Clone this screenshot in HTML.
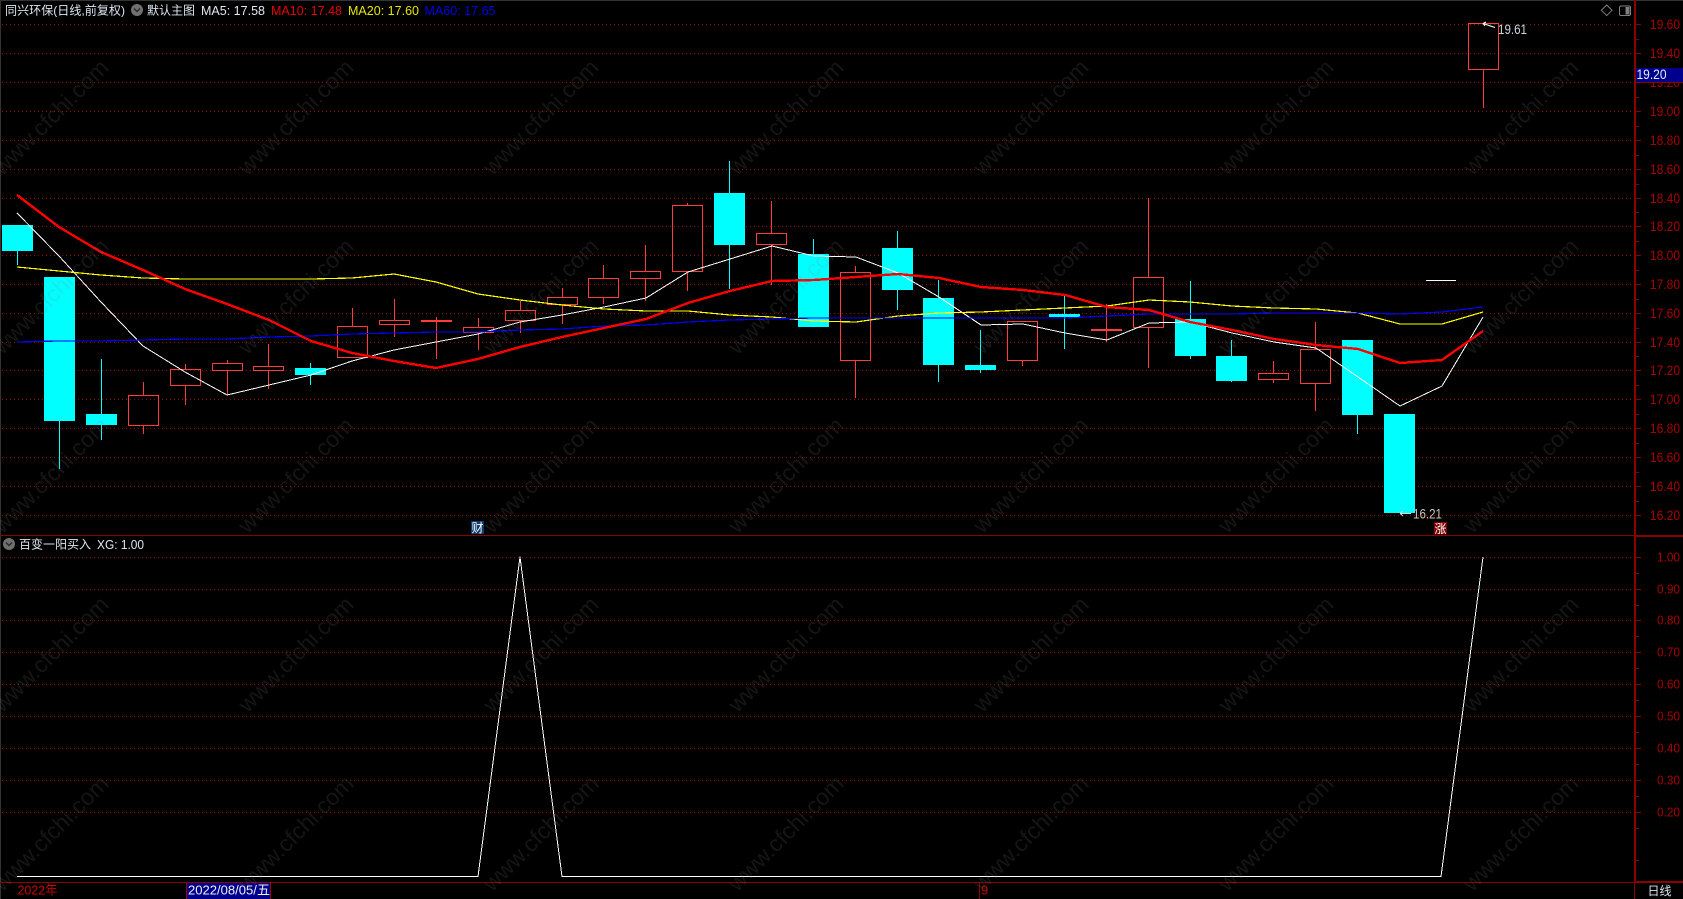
<!DOCTYPE html>
<html lang="zh">
<head>
<meta charset="utf-8">
<title>同兴环保 日线</title>
<style>
html,body{margin:0;padding:0;background:#000;width:1683px;height:899px;overflow:hidden}
svg{display:block}
text{font-family:"Liberation Sans","Noto Sans CJK SC",sans-serif;font-size:13px}
.g{stroke:#980000;stroke-width:1;stroke-dasharray:1 3;fill:none}
.a text{fill:#a80000}
.a .m{font-size:14px}
.r{fill:none;stroke:#ff3c3c;stroke-width:1}
.c{fill:#0ff}
.w text{font-size:23px;fill:rgba(128,128,128,.16);text-anchor:end}
</style>
</head>
<body>
<svg width="1683" height="899" viewBox="0 0 1683 899" xmlns="http://www.w3.org/2000/svg">
<rect width="1683" height="899" fill="#000"/>
<path d="M0 .5H1683M.5 0V899" stroke="#333" fill="none" shape-rendering="crispEdges"/>

<!-- grid -->
<g class="g" shape-rendering="crispEdges">
<path d="M2 24.5H1635M2 53.5H1635M2 82.5H1635M2 111.5H1635M2 140.5H1635M2 169.5H1635M2 198.5H1635M2 226.5H1635M2 255.5H1635M2 284.5H1635M2 313.5H1635M2 342.5H1635M2 370.5H1635M2 399.5H1635M2 428.5H1635M2 457.5H1635M2 486.5H1635M2 515.5H1635"/>
<path d="M2 557.5H1635M2 589.5H1635M2 620.5H1635M2 652.5H1635M2 684.5H1635M2 716.5H1635M2 748.5H1635M2 780.5H1635M2 812.5H1635"/>
</g>

<!-- candles -->
<g shape-rendering="crispEdges">
<g class="c">
<rect x="2" y="225" width="31" height="26"/>
<rect x="44" y="277" width="31" height="144"/>
<rect x="86" y="414" width="31" height="11"/>
<rect x="295" y="368" width="31" height="7"/>
<rect x="714" y="193" width="31" height="52"/>
<rect x="798" y="254" width="31" height="73"/>
<rect x="882" y="248" width="31" height="42"/>
<rect x="923" y="298" width="31" height="67"/>
<rect x="965" y="365" width="31" height="5"/>
<rect x="1049" y="314" width="31" height="3"/>
<rect x="1175" y="319" width="31" height="37"/>
<rect x="1216" y="356" width="31" height="25"/>
<rect x="1342" y="340" width="31" height="75"/>
<rect x="1384" y="414" width="31" height="99"/>
</g>
<path fill="none" stroke="#0ff" d="M17.5 251V265M59.5 421V469M101.5 359V414M101.5 425V440M310.5 363V368M310.5 375V385M729.5 161V193M729.5 245V289M813.5 239V254M897.5 231V248M897.5 290V310M938.5 280V298M938.5 365V382M980.5 330V365M980.5 370V373M1064.5 296V314M1064.5 317V349M1190.5 281V319M1190.5 356V359M1231.5 340V356M1231.5 381V382M1357.5 415V434"/>
<g class="r">
<rect x="128.5" y="395.5" width="30" height="30"/>
<rect x="170.5" y="369.5" width="30" height="16"/>
<rect x="212.5" y="363.5" width="30" height="7"/>
<rect x="253.5" y="366.5" width="30" height="4"/>
<rect x="337.5" y="326.5" width="30" height="31"/>
<rect x="379.5" y="320.5" width="30" height="4"/>
<rect x="463.5" y="327.5" width="30" height="5"/>
<rect x="505.5" y="310.5" width="30" height="10"/>
<rect x="547.5" y="297.5" width="30" height="7"/>
<rect x="588.5" y="278.5" width="30" height="19"/>
<rect x="630.5" y="271.5" width="30" height="7"/>
<rect x="672.5" y="205.5" width="30" height="66"/>
<rect x="756.5" y="233.5" width="30" height="11"/>
<rect x="840.5" y="272.5" width="30" height="88"/>
<rect x="1007.5" y="321.5" width="30" height="39"/>
<rect x="1133.5" y="277.5" width="30" height="50"/>
<rect x="1258.5" y="373.5" width="30" height="6"/>
<rect x="1300.5" y="349.5" width="30" height="34"/>
<rect x="1468.5" y="23.5" width="30" height="46"/>
<path d="M143.5 382V395M143.5 426V434M185.5 364V369M185.5 386V405M227.5 360V363M227.5 371V395M268.5 344V366M268.5 371V389M352.5 308V326M394.5 299V320M394.5 325V337M436.5 317V359M478.5 318V327M478.5 333V350M520.5 301V310M520.5 321V333M562.5 288V297M562.5 305V324M603.5 265V278M603.5 298V304M645.5 245V271M645.5 279V301M687.5 203V205M687.5 272V291M771.5 201V233M771.5 245V285M855.5 266V272M855.5 361V398M1022.5 361V366M1106.5 304V342M1148.5 198V277M1148.5 328V368M1273.5 361V373M1273.5 380V383M1315.5 322V349M1315.5 384V411M1483.5 70V108"/>
</g>
<rect x="421" y="320" width="31" height="2" fill="#ff3c3c"/>
<rect x="1091" y="329" width="31" height="2" fill="#ff3c3c"/>
<rect x="1426" y="280" width="30" height="1" fill="#fff"/>
</g>

<!-- moving averages -->
<g fill="none" shape-rendering="crispEdges" stroke-linejoin="round">
<polyline stroke="#fff" stroke-width="1" points="17,213 59,256 101,302 143,346 185,372 227,395 269,385 311,375 352,361 394,350 436,342 478,334 520,322 562,315 604,307 646,298 688,272 730,259 772,246 814,256 856,257 898,273 939,297 981,325 1023,324 1065,333 1107,340 1149,323 1190,322 1232,333 1274,342 1316,348 1358,377 1400,406 1442,386 1483,317"/>
<polyline stroke="#ff0" stroke-width="1.2" points="17,267 59,271 101,275 143,278 185,279 227,279 269,279 311,279 352,278 394,274 436,282 478,294 520,300 562,305 604,309 646,311 688,311 730,315 772,317 814,321 856,322 898,316 939,313 981,312 1023,310 1065,308 1107,306 1149,300 1190,302 1232,306 1274,308 1316,309 1358,313 1400,324 1442,324 1483,312"/>
<polyline stroke="#00f" stroke-width="1.2" points="17,342 59,341 101,341 143,340 185,339 227,339 269,337 311,336 352,334 394,333 436,332 478,332 520,330 562,329 604,326 646,325 688,322 730,320 772,319 814,318 856,318 898,318 939,318 981,318 1023,318 1065,318 1107,316 1149,314 1190,314 1232,314 1274,313 1316,313 1358,313 1400,314 1442,312 1483,307"/>
<polyline stroke="#f00" stroke-width="2.4" points="17,195 59,227 101,252 143,270 185,289 227,304 269,320 311,341 352,353 394,361 436,368 478,359 520,347 562,337 604,328 646,319 688,303 730,291 772,281 814,280 856,277 898,274 939,278 981,287 1023,290 1065,295 1107,307 1149,310 1190,322 1232,330 1274,339 1316,345 1358,349 1400,363 1442,360 1483,331"/>
<polyline stroke="#fff" stroke-width="1" points="17,876.5 478,876.5 520,557 562,876.5 1441,876.5 1483,557"/>
</g>

<!-- frame lines -->
<g shape-rendering="crispEdges" fill="none" stroke="#8c0000">
<path d="M0 535.5H1635M0 882.5H1683"/>
<rect x="1634" y="0" width="2" height="882" fill="#8c0000" stroke="none"/>
<path d="M1634.5 882V899M1635 535.5H1683M1635 536.5H1683M1635 881.5H1683M979.5 883V899"/>
<path d="M1636 24.5h5M1636 53.5h5M1636 82.5h5M1636 111.5h5M1636 140.5h5M1636 169.5h5M1636 198.5h5M1636 226.5h5M1636 255.5h5M1636 284.5h5M1636 313.5h5M1636 342.5h5M1636 370.5h5M1636 399.5h5M1636 428.5h5M1636 457.5h5M1636 486.5h5M1636 515.5h5"/>
<path d="M1636 39.5h3M1636 68.5h3M1636 97.5h3M1636 126.5h3M1636 155.5h3M1636 184.5h3M1636 212.5h3M1636 241.5h3M1636 270.5h3M1636 299.5h3M1636 328.5h3M1636 356.5h3M1636 385.5h3M1636 414.5h3M1636 443.5h3M1636 472.5h3M1636 501.5h3"/>
<path d="M1636 557.5h5M1636 589.5h5M1636 620.5h5M1636 652.5h5M1636 684.5h5M1636 716.5h5M1636 748.5h5M1636 780.5h5M1636 812.5h5"/>
<path d="M1636 573.5h3M1636 605.5h3M1636 636.5h3M1636 668.5h3M1636 700.5h3M1636 732.5h3M1636 764.5h3M1636 796.5h3M1636 828.5h3M1636 860.5h3"/>
</g>

<!-- axis labels -->
<g class="a">
<text class="m" x="1650" y="29" textLength="30" lengthAdjust="spacingAndGlyphs">19.60</text>
<text class="m" x="1650" y="58" textLength="30" lengthAdjust="spacingAndGlyphs">19.40</text>
<text class="m" x="1650" y="87" textLength="30" lengthAdjust="spacingAndGlyphs">19.20</text>
<text class="m" x="1650" y="116" textLength="30" lengthAdjust="spacingAndGlyphs">19.00</text>
<text class="m" x="1650" y="145" textLength="30" lengthAdjust="spacingAndGlyphs">18.80</text>
<text class="m" x="1650" y="174" textLength="30" lengthAdjust="spacingAndGlyphs">18.60</text>
<text class="m" x="1650" y="203" textLength="30" lengthAdjust="spacingAndGlyphs">18.40</text>
<text class="m" x="1650" y="231" textLength="30" lengthAdjust="spacingAndGlyphs">18.20</text>
<text class="m" x="1650" y="260" textLength="30" lengthAdjust="spacingAndGlyphs">18.00</text>
<text class="m" x="1650" y="289" textLength="30" lengthAdjust="spacingAndGlyphs">17.80</text>
<text class="m" x="1650" y="318" textLength="30" lengthAdjust="spacingAndGlyphs">17.60</text>
<text class="m" x="1650" y="347" textLength="30" lengthAdjust="spacingAndGlyphs">17.40</text>
<text class="m" x="1650" y="375" textLength="30" lengthAdjust="spacingAndGlyphs">17.20</text>
<text class="m" x="1650" y="404" textLength="30" lengthAdjust="spacingAndGlyphs">17.00</text>
<text class="m" x="1650" y="433" textLength="30" lengthAdjust="spacingAndGlyphs">16.80</text>
<text class="m" x="1650" y="462" textLength="30" lengthAdjust="spacingAndGlyphs">16.60</text>
<text class="m" x="1650" y="491" textLength="30" lengthAdjust="spacingAndGlyphs">16.40</text>
<text class="m" x="1650" y="520" textLength="30" lengthAdjust="spacingAndGlyphs">16.20</text>
<text x="1657" y="561.5" textLength="23" lengthAdjust="spacingAndGlyphs">1.00</text>
<text x="1657" y="593.5" textLength="23" lengthAdjust="spacingAndGlyphs">0.90</text>
<text x="1657" y="624.5" textLength="23" lengthAdjust="spacingAndGlyphs">0.80</text>
<text x="1657" y="656.5" textLength="23" lengthAdjust="spacingAndGlyphs">0.70</text>
<text x="1657" y="688.5" textLength="23" lengthAdjust="spacingAndGlyphs">0.60</text>
<text x="1657" y="720.5" textLength="23" lengthAdjust="spacingAndGlyphs">0.50</text>
<text x="1657" y="752.5" textLength="23" lengthAdjust="spacingAndGlyphs">0.40</text>
<text x="1657" y="784.5" textLength="23" lengthAdjust="spacingAndGlyphs">0.30</text>
<text x="1657" y="816.5" textLength="23" lengthAdjust="spacingAndGlyphs">0.20</text>
</g>

<!-- price tag -->
<rect x="1636" y="68" width="47" height="14" fill="#00008c" shape-rendering="crispEdges"/>
<path d="M1636 82.5H1683" stroke="#8c0000" shape-rendering="crispEdges"/>
<text x="1636.5" y="79" fill="#e6eef5" style="font-size:14px" textLength="30" lengthAdjust="spacingAndGlyphs">19.20</text>

<!-- header -->
<text x="5" y="14.5" fill="#dce6f0" style="font-size:12px" textLength="120" lengthAdjust="spacingAndGlyphs">同兴环保(日线,前复权)</text>
<circle cx="137" cy="10" r="6" fill="#707070"/>
<path d="M134 8.5l3 3 3-3" fill="none" stroke="#2a2a2a" stroke-width="1.4"/>
<text x="147" y="14.5" fill="#dce6f0" style="font-size:12px">默认主图</text>
<text x="201" y="15" fill="#e0e8f0" textLength="64" lengthAdjust="spacingAndGlyphs">MA5: 17.58</text>
<text x="271" y="15" fill="#e60000" textLength="71" lengthAdjust="spacingAndGlyphs">MA10: 17.48</text>
<text x="348" y="15" fill="#e6e600" textLength="71" lengthAdjust="spacingAndGlyphs">MA20: 17.60</text>
<text x="424.5" y="15" fill="#0000e6" textLength="71" lengthAdjust="spacingAndGlyphs">MA60: 17.65</text>

<!-- top right icons -->
<path d="M1606.7 5l5.3 5.3-5.3 5.3-5.3-5.3z" fill="none" stroke="#808080"/>
<rect x="1619.5" y="6" width="11" height="9.5" rx="1.5" fill="none" stroke="#808080"/>
<rect x="1625.5" y="7" width="4" height="7.5" fill="#808080"/>

<!-- price marks -->
<path d="M1483 23.5L1495 27.5M1483 23.5l3-1.5M1483 23.5l2 2.5" stroke="#fff" fill="none" stroke-width="1"/>
<text x="1498" y="34" fill="#ccd6e0" style="font-size:14px" textLength="29" lengthAdjust="spacingAndGlyphs">19.61</text>
<path d="M1400 513.5H1411M1400 513.5l3-2.5M1400 513.5l3 2.5" stroke="#ddd" fill="none" stroke-width="1"/>
<text x="1413" y="518.5" fill="#ccc4b8" style="font-size:14px" textLength="29" lengthAdjust="spacingAndGlyphs">16.21</text>

<!-- badges -->
<rect x="471" y="521" width="13" height="13" fill="#0c3c6e"/>
<text x="471.5" y="532" fill="#fff" style="font-size:12px">财</text>
<rect x="1434" y="522" width="13" height="12.5" fill="#800000"/>
<text x="1434.5" y="533" fill="#fff" style="font-size:12px">涨</text>

<!-- sub header -->
<circle cx="9" cy="544" r="6" fill="#707070"/>
<path d="M6 542.5l3 3 3-3" fill="none" stroke="#2a2a2a" stroke-width="1.4"/>
<text x="19" y="548.5" fill="#dce6f0" style="font-size:12px">百变一阳买入</text>
<text x="97" y="549" fill="#dce6f0" textLength="47" lengthAdjust="spacingAndGlyphs">XG: 1.00</text>

<!-- bottom bar -->
<text x="17.5" y="894.5" fill="#c80000" textLength="40" lengthAdjust="spacingAndGlyphs">2022年</text>
<rect x="187" y="883" width="84" height="16" fill="#00008c" shape-rendering="crispEdges"/>
<path d="M186.5 883V899M270.5 883V899" stroke="#a00000" shape-rendering="crispEdges"/>
<text x="188" y="894.5" fill="#f0f0f0" textLength="82" lengthAdjust="spacingAndGlyphs">2022/08/05/五</text>
<text x="981" y="894.5" fill="#c80000">9</text>
<text x="1647.5" y="895" fill="#dce6f0" style="font-size:12px">日线</text>

<!-- watermark -->
<g class="w">
<text transform="translate(110 69) rotate(-45)">www.cfchi.com</text>
<text transform="translate(355 69) rotate(-45)">www.cfchi.com</text>
<text transform="translate(600 69) rotate(-45)">www.cfchi.com</text>
<text transform="translate(845 69) rotate(-45)">www.cfchi.com</text>
<text transform="translate(1090 69) rotate(-45)">www.cfchi.com</text>
<text transform="translate(1335 69) rotate(-45)">www.cfchi.com</text>
<text transform="translate(1580 69) rotate(-45)">www.cfchi.com</text>
<text transform="translate(110 248) rotate(-45)">www.cfchi.com</text>
<text transform="translate(355 248) rotate(-45)">www.cfchi.com</text>
<text transform="translate(600 248) rotate(-45)">www.cfchi.com</text>
<text transform="translate(845 248) rotate(-45)">www.cfchi.com</text>
<text transform="translate(1090 248) rotate(-45)">www.cfchi.com</text>
<text transform="translate(1335 248) rotate(-45)">www.cfchi.com</text>
<text transform="translate(1580 248) rotate(-45)">www.cfchi.com</text>
<text transform="translate(110 427) rotate(-45)">www.cfchi.com</text>
<text transform="translate(355 427) rotate(-45)">www.cfchi.com</text>
<text transform="translate(600 427) rotate(-45)">www.cfchi.com</text>
<text transform="translate(845 427) rotate(-45)">www.cfchi.com</text>
<text transform="translate(1090 427) rotate(-45)">www.cfchi.com</text>
<text transform="translate(1335 427) rotate(-45)">www.cfchi.com</text>
<text transform="translate(1580 427) rotate(-45)">www.cfchi.com</text>
<text transform="translate(110 606) rotate(-45)">www.cfchi.com</text>
<text transform="translate(355 606) rotate(-45)">www.cfchi.com</text>
<text transform="translate(600 606) rotate(-45)">www.cfchi.com</text>
<text transform="translate(845 606) rotate(-45)">www.cfchi.com</text>
<text transform="translate(1090 606) rotate(-45)">www.cfchi.com</text>
<text transform="translate(1335 606) rotate(-45)">www.cfchi.com</text>
<text transform="translate(1580 606) rotate(-45)">www.cfchi.com</text>
<text transform="translate(110 785) rotate(-45)">www.cfchi.com</text>
<text transform="translate(355 785) rotate(-45)">www.cfchi.com</text>
<text transform="translate(600 785) rotate(-45)">www.cfchi.com</text>
<text transform="translate(845 785) rotate(-45)">www.cfchi.com</text>
<text transform="translate(1090 785) rotate(-45)">www.cfchi.com</text>
<text transform="translate(1335 785) rotate(-45)">www.cfchi.com</text>
<text transform="translate(1580 785) rotate(-45)">www.cfchi.com</text>
</g>
</svg>
</body>
</html>
